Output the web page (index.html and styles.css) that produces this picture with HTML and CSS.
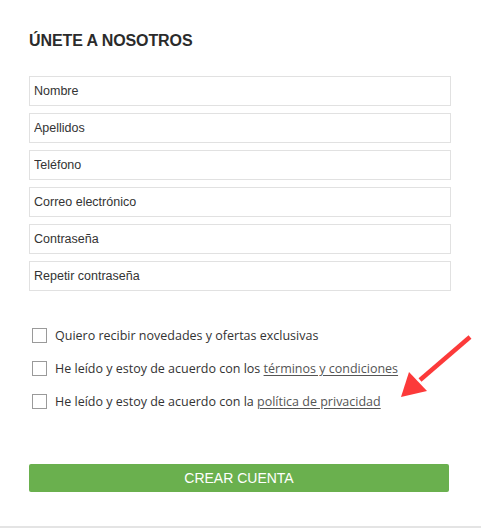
FILE: index.html
```html
<!DOCTYPE html>
<html lang="es">
<head>
<meta charset="utf-8">
<title>Únete a nosotros</title>
<link rel="stylesheet" href="styles.css">
</head>
<body>
<div class="page">
  <form class="signup">
    <h2 class="title">ÚNETE A NOSOTROS</h2>
    <div class="fields">
      <input class="field" type="text" placeholder="Nombre">
      <input class="field" type="text" placeholder="Apellidos">
      <input class="field" type="text" placeholder="Teléfono">
      <input class="field" type="email" placeholder="Correo electrónico">
      <input class="field" type="password" placeholder="Contraseña">
      <input class="field" type="password" placeholder="Repetir contraseña">
    </div>
    <div class="checks">
      <label class="check"><span class="box"></span><span>Quiero recibir novedades y ofertas exclusivas</span></label>
      <label class="check"><span class="box"></span><span>He leído y estoy de acuerdo con los <a class="link" href="#">términos y condiciones</a></span></label>
      <label class="check"><span class="box"></span><span>He leído y estoy de acuerdo con la <a class="link" href="#">política de privacidad</a></span></label>
    </div>
    <button class="submit" type="button">CREAR CUENTA</button>
  </form>
  <svg class="arrow" width="80" height="70" viewBox="0 0 80 70">
    <line x1="70" y1="7" x2="20" y2="50" stroke="#fc3a3a" stroke-width="4.5" stroke-linecap="butt"/>
    <polygon points="1,67 9,42 27,61" fill="#fc3a3a"/>
  </svg>
</div>
</body>
</html>
```
FILE: styles.css
```css
* { box-sizing: border-box; }
html, body { margin: 0; padding: 0; background: #fff; }
.page {
  position: relative;
  width: 481px;
  height: 528px;
  border-bottom: 2px solid #e4e4e4;
  overflow: hidden;
}
.signup {
  padding: 32px 30px 0 29px;
  display: flex;
  flex-direction: column;
}
.title {
  margin: 0;
  font-family: "Liberation Sans", Arial, sans-serif;
  font-weight: bold;
  font-size: 16px;
  line-height: 18px;
  color: #2b2b2b;
  letter-spacing: -0.1px;
}
.fields {
  margin-top: 26px;
  display: flex;
  flex-direction: column;
  gap: 7px;
}
.field {
  display: block;
  width: 422px;
  height: 30px;
  margin: 0;
  padding: 0 4px;
  border: 1px solid #e1e1e1;
  border-radius: 0;
  font-family: "Liberation Sans", Arial, sans-serif;
  font-size: 12.5px;
  color: #333;
  background: #fff;
  outline: none;
}
.field::placeholder { color: #333; opacity: 1; }
.checks {
  margin-top: 28px;
  display: flex;
  flex-direction: column;
}
.check {
  display: flex;
  align-items: center;
  gap: 8px;
  padding-left: 3px;
  height: 33px;
  font-family: "Open Sans", sans-serif;
  font-size: 12.5px;
  color: #333;
}
.box {
  width: 15px;
  height: 15px;
  border: 1px solid #9a9a9a;
  background: #fff;
  flex: none;
}
.link {
  color: #555;
  text-decoration: underline;
  text-underline-offset: 2px;
}
.submit {
  margin-top: 46px;
  width: 420px;
  height: 28px;
  border: none;
  border-radius: 2px;
  background: #6ab04e;
  color: #fff;
  font-family: "Liberation Sans", Arial, sans-serif;
  font-size: 14px;
  padding: 0;
}
.arrow {
  position: absolute;
  left: 400px;
  top: 330px;
}
```
